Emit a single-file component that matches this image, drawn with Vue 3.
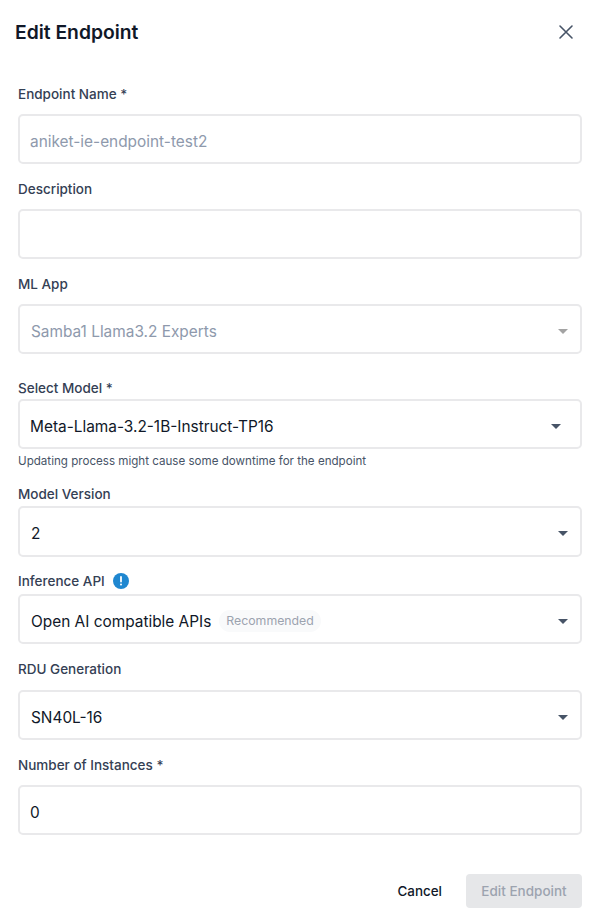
<template>
  <div class="modal">
    <header class="header">
      <h2 class="title">Edit Endpoint</h2>
      <button class="close" aria-label="Close">
        <svg width="16" height="16" viewBox="0 0 16 16" fill="none" stroke="#475467" stroke-width="1.6" stroke-linecap="round">
          <path d="M2 2l12 12M14 2L2 14" />
        </svg>
      </button>
    </header>

    <form class="form" @submit.prevent>
      <div class="field name-field">
        <label class="label">Endpoint Name *</label>
        <div class="control muted inset">aniket-ie-endpoint-test2</div>
      </div>

      <div class="field">
        <label class="label">Description</label>
        <div class="control"></div>
      </div>

      <div class="field">
        <label class="label">ML App</label>
        <div class="control muted select">
          <span>Samba1 Llama3.2 Experts</span>
          <span class="arrow disabled"></span>
        </div>
      </div>

      <div class="field model-field">
        <label class="label">Select Model *</label>
        <div class="control select model inset">
          <span>Meta-Llama-3.2-1B-Instruct-TP16</span>
          <span class="arrow"></span>
        </div>
        <p class="help">Updating process might cause some downtime for the endpoint</p>
      </div>

      <div class="field version-field">
        <label class="label">Model Version</label>
        <div class="control select tall">
          <span>2</span>
          <span class="arrow"></span>
        </div>
      </div>

      <div class="field api-field">
        <label class="label">
          Inference API
          <svg class="info" width="16" height="16" viewBox="0 0 16 16">
            <circle cx="8" cy="8" r="8" fill="#1f87d0" />
            <path d="M8 4v4.6" stroke="#fff" stroke-width="1.8" stroke-linecap="round" />
            <circle cx="8" cy="11.4" r="1" fill="#fff" />
          </svg>
        </label>
        <div class="control select">
          <span class="api-value">
            Open AI compatible APIs
            <span class="badge">Recommended</span>
          </span>
          <span class="arrow"></span>
        </div>
      </div>

      <div class="field rdu-field">
        <label class="label">RDU Generation</label>
        <div class="control select">
          <span>SN40L-16</span>
          <span class="arrow"></span>
        </div>
      </div>

      <div class="field">
        <label class="label">Number of Instances *</label>
        <div class="control inset">0</div>
      </div>
    </form>

    <footer class="footer">
      <button class="cancel">Cancel</button>
      <button class="submit" disabled>Edit Endpoint</button>
    </footer>
  </div>
</template>

<script setup>
</script>

<style>
body {
  background: #fff;
}
</style>

<style scoped>
.modal {
  width: 600px;
  height: 920px;
  box-sizing: border-box;
  font-family: Inter, "Liberation Sans", sans-serif;
  background: #fff;
  overflow: hidden;
}

.header {
  display: flex;
  justify-content: space-between;
  align-items: center;
  height: 62px;
  padding: 1px 26px 0 15px;
  box-sizing: border-box;
}

.title {
  margin: 0;
  font-size: 19.3px;
  line-height: 24px;
  font-weight: 600;
  color: #101828;
}

.close {
  display: flex;
  padding: 0;
  border: none;
  background: none;
}

.form {
  padding: 0 18px;
}

.field {
  margin-bottom: 14px;
}

.name-field {
  margin-top: 21px;
}

.model-field {
  margin-top: 23px;
  margin-bottom: 0;
}

.model-field .label {
  margin-bottom: 0;
}

.version-field {
  margin-top: 15px;
  margin-bottom: 13px;
}

.version-field .label {
  margin-bottom: 1px;
}

.api-field .label {
  margin-bottom: 2px;
}

.rdu-field .label {
  margin-bottom: 10px;
}

.label {
  display: flex;
  align-items: center;
  height: 22px;
  margin-bottom: 9px;
  font-size: 13.5px;
  font-weight: 500;
  color: #344054;
}

.info {
  margin-left: 8px;
}

.control {
  display: flex;
  align-items: center;
  box-sizing: border-box;
  height: 50px;
  padding: 4px 12px 0 11px;
  border: 2px solid #e9e9eb;
  border-radius: 5px;
  font-size: 15.4px;
  color: #101828;
  background: #fff;
}

.inset {
  padding-left: 10px;
}

.tall {
  height: 51px;
}

.muted {
  color: #8e99ac;
}

.select {
  justify-content: space-between;
}

.model {
  padding-right: 19px;
}

.api-value {
  display: flex;
  align-items: center;
}

.badge {
  margin-left: 8px;
  padding: 3px 7px;
  border-radius: 12px;
  font-size: 12.3px;
  line-height: 16px;
  color: #9ca3af;
  background: #f9fafb;
}

.arrow {
  width: 0;
  height: 0;
  border-left: 5px solid transparent;
  border-right: 5px solid transparent;
  border-top: 5px solid #475467;
}

.arrow.disabled {
  border-top-color: #a3a3a3;
}

.help {
  margin: 5px 0 0;
  font-size: 11.6px;
  line-height: 14px;
  color: #475467;
}

.footer {
  display: flex;
  justify-content: flex-end;
  align-items: center;
  gap: 24px;
  margin-top: 39px;
  padding: 0 18px;
}

.cancel {
  padding: 0;
  border: none;
  background: none;
  font: 500 13.4px Inter, "Liberation Sans", sans-serif;
  color: #101828;
}

.submit {
  width: 116px;
  height: 34px;
  border: none;
  border-radius: 4px;
  background: #e6e7e9;
  font: 500 13.5px Inter, "Liberation Sans", sans-serif;
  color: #9ca3af;
}
</style>
